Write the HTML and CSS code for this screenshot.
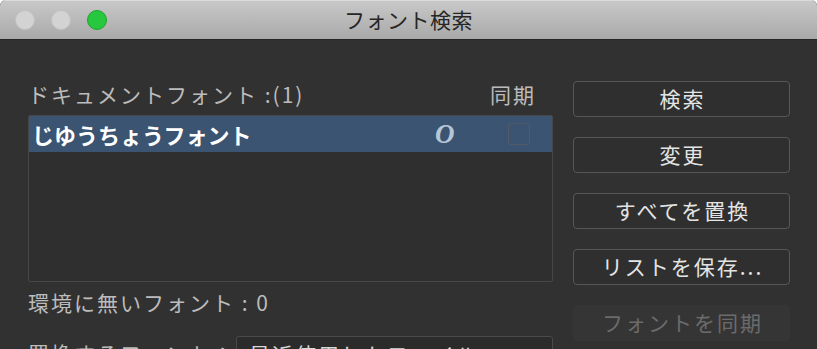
FILE: index.html
```html
<!DOCTYPE html>
<html lang="ja">
<head>
<meta charset="utf-8">
<link rel="stylesheet" href="styles.css">
</head>
<body>
<div class="window">
  <div class="titlebar">
    <div class="lights">
      <span class="light off"></span>
      <span class="light off"></span>
      <span class="light green"></span>
    </div>
    <div class="title">フォント検索</div>
  </div>
  <div class="content">
    <div class="left">
      <div class="list-head">
        <span>ドキュメントフォント :(1)</span>
        <span>同期</span>
      </div>
      <div class="list">
        <div class="row selected">
          <span class="name">じゆうちょうフォント</span>
          <span class="glyph">O</span>
          <span class="check"></span>
        </div>
      </div>
      <div class="missing">環境に無いフォント&nbsp;:&nbsp;0</div>
      <div class="replace">
        <span class="replace-label">置換するフォント：</span>
        <div class="select">最近使用したファイル</div>
      </div>
    </div>
    <div class="right">
      <div class="btn">検索</div>
      <div class="btn">変更</div>
      <div class="btn">すべてを置換</div>
      <div class="btn">リストを保存...</div>
      <div class="btn disabled">フォントを同期</div>
    </div>
  </div>
</div>
</body>
</html>
```
FILE: styles.css
```css
html, body {
  margin: 0;
  padding: 0;
  background: #ffffff;
  overflow: hidden;
}
body {
  font-family: "Noto Sans CJK JP", "Noto Sans", sans-serif;
  width: 817px;
  height: 349px;
}
.window {
  width: 817px;
  height: 349px;
  background: #313131;
  border-radius: 6px 6px 0 0;
  overflow: hidden;
}
.titlebar {
  height: 39px;
  background: linear-gradient(#c9c9c9, #a9a9a9);
  border-bottom: 1px solid #262626;
  box-shadow: inset 0 1px 0 #dcdcdc;
  display: flex;
  align-items: center;
  position: relative;
}
.lights {
  display: flex;
  gap: 16px;
  padding-left: 15px;
}
.light {
  width: 20px;
  height: 20px;
  border-radius: 50%;
  box-sizing: border-box;
}
.light.off {
  background: #d3d3d3;
  border: 1px solid #c2c2c2;
}
.light.green {
  background: #28c83e;
  border: 1px solid #1aa52e;
}
.title {
  position: absolute;
  left: 0;
  right: 0;
  text-align: center;
  font-size: 21px;
  color: #262626;
  line-height: 39px;
  letter-spacing: 0.5px;
}
.content {
  display: flex;
  gap: 20px;
  padding: 0 27px 0 28px;
}
.left {
  width: 525px;
  padding-top: 79px;
}
.list-head {
  display: flex;
  justify-content: space-between;
  font-size: 21px;
  line-height: 34px;
  color: #bcbcbc;
  letter-spacing: 2px;
  padding-right: 17px;
  height: 38px;
  margin-top: -42px;
}
.list {
  height: 165px;
  border: 1px solid #474747;
  border-radius: 2px;
  background: #2f2f2f;
}
.row {
  height: 36px;
  display: flex;
  align-items: center;
  padding-left: 3px;
}
.row.selected {
  background: #3a5472;
}
.name {
  font-size: 22px;
  font-weight: bold;
  color: #ffffff;
  flex: 1;
}
.glyph {
  font-family: "Liberation Serif", serif;
  font-style: italic;
  font-weight: bold;
  font-size: 27px;
  color: #b7c6d6;
  width: 20px;
}
.check {
  width: 22px;
  height: 22px;
  box-sizing: border-box;
  border: 1px solid #525a67;
  border-radius: 2px;
  margin-left: 53px;
  margin-right: 22px;
}
.missing {
  font-size: 21px;
  color: #bcbcbc;
  letter-spacing: 2px;
  line-height: 40px;
  margin-top: 0;
}
.replace {
  display: flex;
  align-items: flex-start;
  margin-top: 14px;
}
.replace-label {
  font-size: 21px;
  color: #bcbcbc;
  letter-spacing: 2px;
  width: 208px;
  line-height: 34px;
}
.select {
  flex: 1;
  height: 30px;
  border: 1px solid #4a4a4a;
  border-radius: 3px;
  background: #2b2b2b;
  color: #d8d8d8;
  font-size: 21px;
  letter-spacing: 2px;
  line-height: 34px;
  padding-left: 12px;
}
.right {
  width: 217px;
  padding-top: 41px;
  display: flex;
  flex-direction: column;
  gap: 20px;
}
.btn {
  height: 36px;
  box-sizing: border-box;
  border: 1.5px solid #575757;
  border-radius: 4px;
  background: #2f2f2f;
  color: #e4e4e4;
  font-size: 21px;
  letter-spacing: 2px;
  text-indent: 2px;
  line-height: 33px;
  text-align: center;
}
.btn.disabled {
  border-color: #353535;
  background: #353535;
  color: #6b6b6b;
}
```
